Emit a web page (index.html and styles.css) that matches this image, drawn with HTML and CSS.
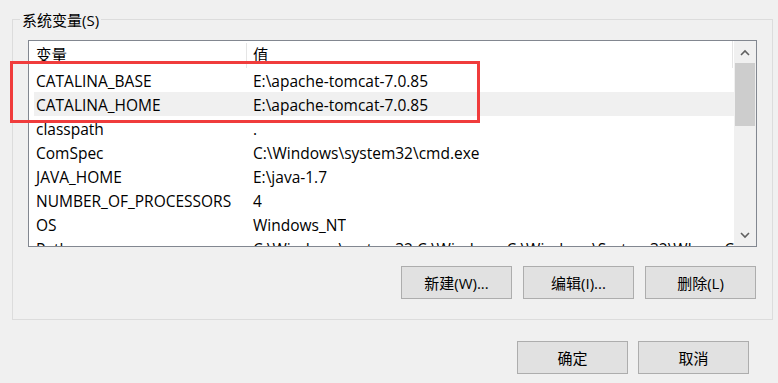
FILE: index.html
```html
<!DOCTYPE html>
<html lang="zh-CN">
<head>
  <meta charset="UTF-8" />
  <meta name="viewport" content="width=device-width, initial-scale=1.0" />
  <title>系统变量</title>
  <link rel="stylesheet" href="styles.css">
</head>
<body>
  <div class="dialog">
    <div class="group">
      <span class="group-title">系统变量(S)</span>

      <div class="var-list">
        <div class="var-table">
          <div class="var-header">
            <div class="col-name">变量</div>
            <div class="col-value">值</div>
          </div>
          <div class="var-row"><div class="col-name">CATALINA_BASE</div><div class="col-value">E:\apache-tomcat-7.0.85</div></div>
          <div class="var-row hover"><div class="col-name">CATALINA_HOME</div><div class="col-value">E:\apache-tomcat-7.0.85</div></div>
          <div class="var-row"><div class="col-name">classpath</div><div class="col-value">.</div></div>
          <div class="var-row"><div class="col-name">ComSpec</div><div class="col-value">C:\Windows\system32\cmd.exe</div></div>
          <div class="var-row"><div class="col-name">JAVA_HOME</div><div class="col-value">E:\java-1.7</div></div>
          <div class="var-row"><div class="col-name">NUMBER_OF_PROCESSORS</div><div class="col-value">4</div></div>
          <div class="var-row"><div class="col-name">OS</div><div class="col-value">Windows_NT</div></div>
          <div class="var-row"><div class="col-name">Path</div><div class="col-value">C:\Windows\system32;C:\Windows;C:\Windows\System32\Wbem;C:\Windows\System32\WindowsPowerShell\v1.0\</div></div>
        </div>

        <div class="scrollbar">
          <div class="scroll-btn">
            <svg width="10" height="7" viewBox="0 0 10 7"><polyline points="1,6 5,2 9,6" fill="none" stroke="#606060" stroke-width="1.6"/></svg>
          </div>
          <div class="scroll-track">
            <div class="scroll-thumb"></div>
          </div>
          <div class="scroll-btn">
            <svg width="10" height="7" viewBox="0 0 10 7"><polyline points="1,1 5,5 9,1" fill="none" stroke="#606060" stroke-width="1.6"/></svg>
          </div>
        </div>
      </div>

      <div class="group-actions">
        <button class="win-btn">新建(W)...</button>
        <button class="win-btn">编辑(I)...</button>
        <button class="win-btn">删除(L)</button>
      </div>
    </div>

    <div class="dialog-actions">
      <button class="win-btn">确定</button>
      <button class="win-btn">取消</button>
    </div>
  </div>

  <div class="mark-box"></div>
</body>
</html>
```

FILE: styles.css
```css
body {
  margin: 0;
  background: #f0f0f0;
  color: #000;
  font-family: 'Open Sans', 'Noto Sans CJK SC', sans-serif;
  font-size: 15px;
  width: 778px;
  height: 383px;
  overflow: hidden;
  position: relative;
}

.dialog {
  padding: 19px 5px 0 12px;
}

.group {
  position: relative;
  border: 1px solid #dcdcdc;
  padding: 20px 15px 20px 15px;
}

.group-title {
  position: absolute;
  top: -10px;
  left: 7px;
  padding: 0 2px;
  background: #f0f0f0;
  line-height: 20px;
}

.var-list {
  display: flex;
  height: 207px;
  border: 1px solid #828790;
  background: #fff;
  box-sizing: border-box;
  overflow: hidden;
}

.var-table {
  flex: 1;
  overflow: hidden;
  font-size: 15.5px;
}

.var-header {
  display: flex;
  height: 27px;
  box-sizing: border-box;
  padding-top: 2px;
  line-height: 25px;
  border-right: 1px solid #e5e5e5;
  margin-right: 1px;
}

.var-header .col-name {
  width: 210px;
  padding-left: 7px;
  border-right: 1px solid #e5e5e5;
}

.var-header .col-value {
  padding-left: 6px;
}

.var-row {
  display: flex;
  height: 24px;
  box-sizing: border-box;
  padding-top: 3px;
  line-height: 21px;
  margin-left: 5px;
  white-space: nowrap;
}

.var-row.hover {
  background: #f0f0f0;
}

.var-row .col-name {
  width: 215px;
  padding-left: 2px;
  flex-shrink: 0;
}

.var-row .col-value {
  padding-left: 2px;
  overflow: hidden;
}

.scrollbar {
  width: 22px;
  background: #f0f0f0;
  display: flex;
  flex-direction: column;
}

.scroll-btn {
  height: 22px;
  display: flex;
  align-items: center;
  justify-content: center;
}

.scroll-track {
  flex: 1;
  padding: 0 1px;
}

.scroll-thumb {
  height: 63px;
  background: #cdcdcd;
}

.group-actions {
  display: flex;
  justify-content: flex-end;
  gap: 11px;
  margin-top: 19px;
  padding-right: 1px;
}

.dialog-actions {
  display: flex;
  justify-content: flex-end;
  gap: 10px;
  margin-top: 21px;
  padding-right: 24px;
}

.win-btn {
  width: 111px;
  height: 33px;
  background: #e1e1e1;
  border: 1px solid #adadad;
  font-family: inherit;
  font-size: 15px;
  color: #000;
  padding: 0;
}

.mark-box {
  position: absolute;
  left: 10px;
  top: 61px;
  width: 470px;
  height: 62px;
  border: 3px solid #f03c3c;
  box-sizing: border-box;
}
```
